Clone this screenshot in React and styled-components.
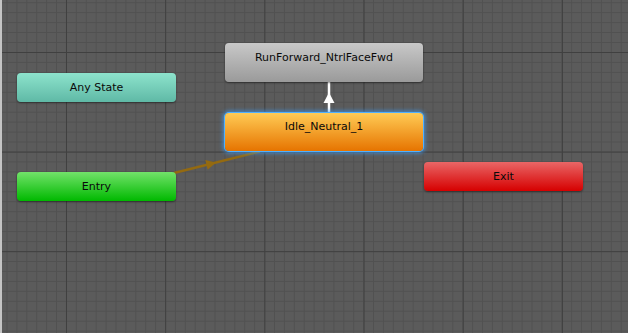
import React from "react";
import styled, { createGlobalStyle, css } from "styled-components";

const Global = createGlobalStyle`
  html, body { margin: 0; padding: 0; background: #5b5b5b; }
  body { font-family: "DejaVu Sans", Verdana, sans-serif; }
`;

const Canvas = styled.div`
  position: relative;
  width: 628px;
  height: 333px;
  overflow: hidden;
  box-sizing: border-box;
  border-left: 2px solid #c4c4c4;
  background-color: #5b5b5b;
  background-image:
    linear-gradient(90deg, #404040 0 1px, transparent 1px),
    linear-gradient(180deg, #404040 0 1px, transparent 1px),
    linear-gradient(90deg, #515151 0 1px, transparent 1px),
    linear-gradient(180deg, #515151 0 1px, transparent 1px);
  background-size: 99.2px 100%, 100% 99.6px, 9.92px 100%, 100% 9.96px;
  background-position: 64px 0, 0 52px, 4.5px 0, 0 2.2px;
`;

const variants = {
  any: css`
    background: linear-gradient(180deg, #8de3cc 0%, #5fb9a6 100%);
  `,
  state: css`
    background: linear-gradient(180deg, #c8c8c8 0%, #9a9a9a 100%);
  `,
  active: css`
    background: linear-gradient(180deg, #ffcb55 0%, #e67400 100%);
    box-shadow: 0 0 0 1px #4fb0ff, 0 0 4px 2px rgba(60, 160, 255, 0.75);
  `,
  entry: css`
    background: linear-gradient(180deg, #72e26a 0%, #00b900 100%);
  `,
  exit: css`
    background: linear-gradient(180deg, #e96666 0%, #d60000 100%);
  `,
};

const Node = styled.div`
  position: absolute;
  left: ${(p) => p.$x}px;
  top: ${(p) => p.$y}px;
  width: ${(p) => p.$w}px;
  height: ${(p) => p.$h}px;
  box-sizing: border-box;
  padding-bottom: ${(p) => (p.$tall ? 11 : 0)}px;
  border-radius: 4px;
  display: flex;
  align-items: center;
  justify-content: center;
  font-family: "DejaVu Sans", Verdana, sans-serif;
  font-size: 11px;
  color: #0a0a0a;
  box-shadow: 0 1px 2px rgba(0, 0, 0, 0.45);
  ${(p) => variants[p.$variant]}
`;

const Edges = styled.svg`
  position: absolute;
  left: -2px;
  top: 0;
  width: 628px;
  height: 333px;
  pointer-events: none;
`;

const nodes = [
  { id: "any", label: "Any State", x: 15, y: 73, w: 159, h: 29, variant: "any" },
  { id: "run", label: "RunForward_NtrlFaceFwd", x: 223, y: 43, w: 198, h: 39, variant: "state", tall: true },
  { id: "entry", label: "Entry", x: 15, y: 172, w: 159, h: 29, variant: "entry" },
  { id: "exit", label: "Exit", x: 422, y: 162, w: 159, h: 29, variant: "exit" },
];

export default function App() {
  return (
    <>
      <Global />
      <Canvas>
        <Edges viewBox="0 0 628 333">
          <line x1="174" y1="173" x2="260" y2="151.5" stroke="#946a10" strokeWidth="2.4" />
          <polygon points="216,162.5 205.3,160 207.7,169.7" fill="#946a10" />
          <line x1="329" y1="82" x2="329" y2="113" stroke="#ffffff" strokeWidth="2.5" />
          <polygon points="329,92.5 323.5,103 334.5,103" fill="#ffffff" />
        </Edges>
        {nodes.map((n) => (
          <Node key={n.id} $x={n.x} $y={n.y} $w={n.w} $h={n.h} $variant={n.variant} $tall={n.tall}>
            {n.label}
          </Node>
        ))}
        <Node $x={223} $y={113} $w={198} $h={38} $variant="active" $tall>
          Idle_Neutral_1
        </Node>
      </Canvas>
    </>
  );
}
